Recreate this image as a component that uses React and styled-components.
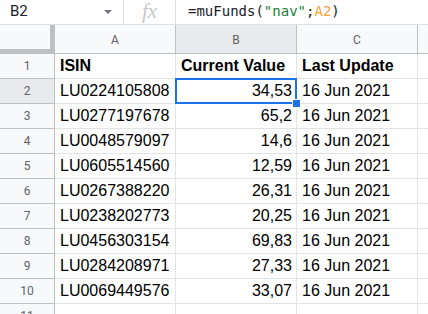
import React from 'react';
import styled, { createGlobalStyle } from 'styled-components';

const GlobalStyle = createGlobalStyle`
  html, body {
    margin: 0;
    padding: 0;
    background: #fff;
    overflow: hidden;
  }
  * {
    box-sizing: border-box;
  }
`;

const rows = [
  ['LU0224105808', '34,53', '16 Jun 2021'],
  ['LU0277197678', '65,2', '16 Jun 2021'],
  ['LU0048579097', '14,6', '16 Jun 2021'],
  ['LU0605514560', '12,59', '16 Jun 2021'],
  ['LU0267388220', '26,31', '16 Jun 2021'],
  ['LU0238202773', '20,25', '16 Jun 2021'],
  ['LU0456303154', '69,83', '16 Jun 2021'],
  ['LU0284208971', '27,33', '16 Jun 2021'],
  ['LU0069449576', '33,07', '16 Jun 2021'],
];

const App = () => {
  return (
    <>
      <GlobalStyle />
      <StyledPage>
        <StyledFormulaBar>
          <StyledNameBox>
            <span>B2</span>
            <StyledCaret />
          </StyledNameBox>
          <StyledFx>fx</StyledFx>
          <StyledFormula>
            =muFunds(<StyledString>"nav"</StyledString>;
            <StyledRef>A2</StyledRef>)
          </StyledFormula>
        </StyledFormulaBar>

        <StyledGrid>
          <StyledCorner />
          <StyledColHeader>A</StyledColHeader>
          <StyledColHeader $active>B</StyledColHeader>
          <StyledColHeader>C</StyledColHeader>
          <StyledColHeader $last />

          <StyledRowHeader>1</StyledRowHeader>
          <StyledCell $bold>ISIN</StyledCell>
          <StyledCell $bold>Current Value</StyledCell>
          <StyledCell $bold>Last Update</StyledCell>
          <StyledCell $last />

          {rows.map(([isin, value, date], i) => (
            <React.Fragment key={isin}>
              <StyledRowHeader $active={i === 0}>{i + 2}</StyledRowHeader>
              <StyledCell>{isin}</StyledCell>
              <StyledCell $right $selected={i === 0}>
                {value}
                {i === 0 && (
                  <StyledSelection>
                    <StyledHandle />
                  </StyledSelection>
                )}
              </StyledCell>
              <StyledCell>{date}</StyledCell>
              <StyledCell $last />
            </React.Fragment>
          ))}

          <StyledRowHeader>11</StyledRowHeader>
          <StyledCell />
          <StyledCell />
          <StyledCell />
          <StyledCell $last />
        </StyledGrid>
      </StyledPage>
    </>
  );
};

export default App;

const StyledPage = styled.div`
  width: 428px;
  height: 314px;
  overflow: hidden;
`;

const StyledFormulaBar = styled.div`
  display: flex;
  align-items: stretch;
  height: 25px;
  border-bottom: 1px solid #e0e0e0;
`;

const StyledNameBox = styled.div`
  display: flex;
  align-items: center;
  justify-content: space-between;
  width: 124px;
  padding: 0 11px 0 10px;
  border-right: 1px solid #e0e0e0;
  font-family: Roboto, 'Liberation Sans', sans-serif;
  font-size: 15px;
  color: #202124;
  span {
    margin-top: -3px;
  }
`;

const StyledCaret = styled.div`
  width: 0;
  height: 0;
  border-left: 4px solid transparent;
  border-right: 4px solid transparent;
  border-top: 4px solid #70757a;
  margin-top: -1px;
`;

const StyledFx = styled.div`
  display: flex;
  align-items: center;
  justify-content: center;
  width: 52px;
  padding-bottom: 3px;
  border-right: 1px solid #e0e0e0;
  font-family: 'Liberation Serif', serif;
  font-style: italic;
  font-size: 21px;
  line-height: 22px;
  color: #c8c8c8;
`;

const StyledFormula = styled.div`
  display: flex;
  align-items: center;
  padding: 0 0 3px 12px;
  font-family: 'DejaVu Sans Mono', 'Liberation Mono', monospace;
  font-size: 14px;
  color: #202124;
  white-space: pre;
`;

const StyledString = styled.span`
  color: #188038;
`;

const StyledRef = styled.span`
  color: #f4a43a;
`;

const StyledGrid = styled.div`
  display: grid;
  grid-template-columns: 55px 121px 121px 121px 1fr;
  grid-template-rows: 29px repeat(11, 25px);
`;

const StyledCorner = styled.div`
  background: #f8f9fa;
  border-right: 5px solid #c0c0c0;
  border-bottom: 5px solid #c0c0c0;
`;

const StyledColHeader = styled.div`
  display: flex;
  align-items: center;
  justify-content: center;
  padding-top: 1px;
  background: ${(p) => (p.$active ? '#e8eaed' : '#f8f9fa')};
  border-right: ${(p) => (p.$last ? 'none' : '1px solid #c0c0c0')};
  border-bottom: 1px solid #c0c0c0;
  font-family: Roboto, 'Liberation Sans', sans-serif;
  font-size: 12px;
  color: #5f6368;
`;

const StyledRowHeader = styled.div`
  display: flex;
  align-items: center;
  justify-content: center;
  background: ${(p) => (p.$active ? '#e8eaed' : '#f8f9fa')};
  border-right: 1px solid #c0c0c0;
  border-bottom: 1px solid #c0c0c0;
  font-family: Roboto, 'Liberation Sans', sans-serif;
  font-size: 12px;
  color: #5f6368;
`;

const StyledCell = styled.div`
  position: relative;
  z-index: ${(p) => (p.$selected ? 1 : 'auto')};
  padding: 0 ${(p) => (p.$right ? '4px' : '3px')} 0 5px;
  border-right: ${(p) => (p.$last ? 'none' : '1px solid #e2e3e3')};
  border-bottom: 1px solid #e2e3e3;
  font-family: 'Liberation Sans', Arial, sans-serif;
  font-size: 16px;
  line-height: 24px;
  font-weight: ${(p) => (p.$bold ? 700 : 400)};
  text-align: ${(p) => (p.$right ? 'right' : 'left')};
  color: #000;
  white-space: nowrap;
  overflow: ${(p) => (p.$selected ? 'visible' : 'hidden')};
`;

const StyledSelection = styled.div`
  position: absolute;
  top: -1px;
  left: -1px;
  right: -1px;
  bottom: -1px;
  border: 2px solid #1a73e8;
  pointer-events: none;
`;

const StyledHandle = styled.div`
  position: absolute;
  right: -6px;
  bottom: -6px;
  width: 9px;
  height: 9px;
  background: #1a73e8;
  border: 1px solid #fff;
`;
